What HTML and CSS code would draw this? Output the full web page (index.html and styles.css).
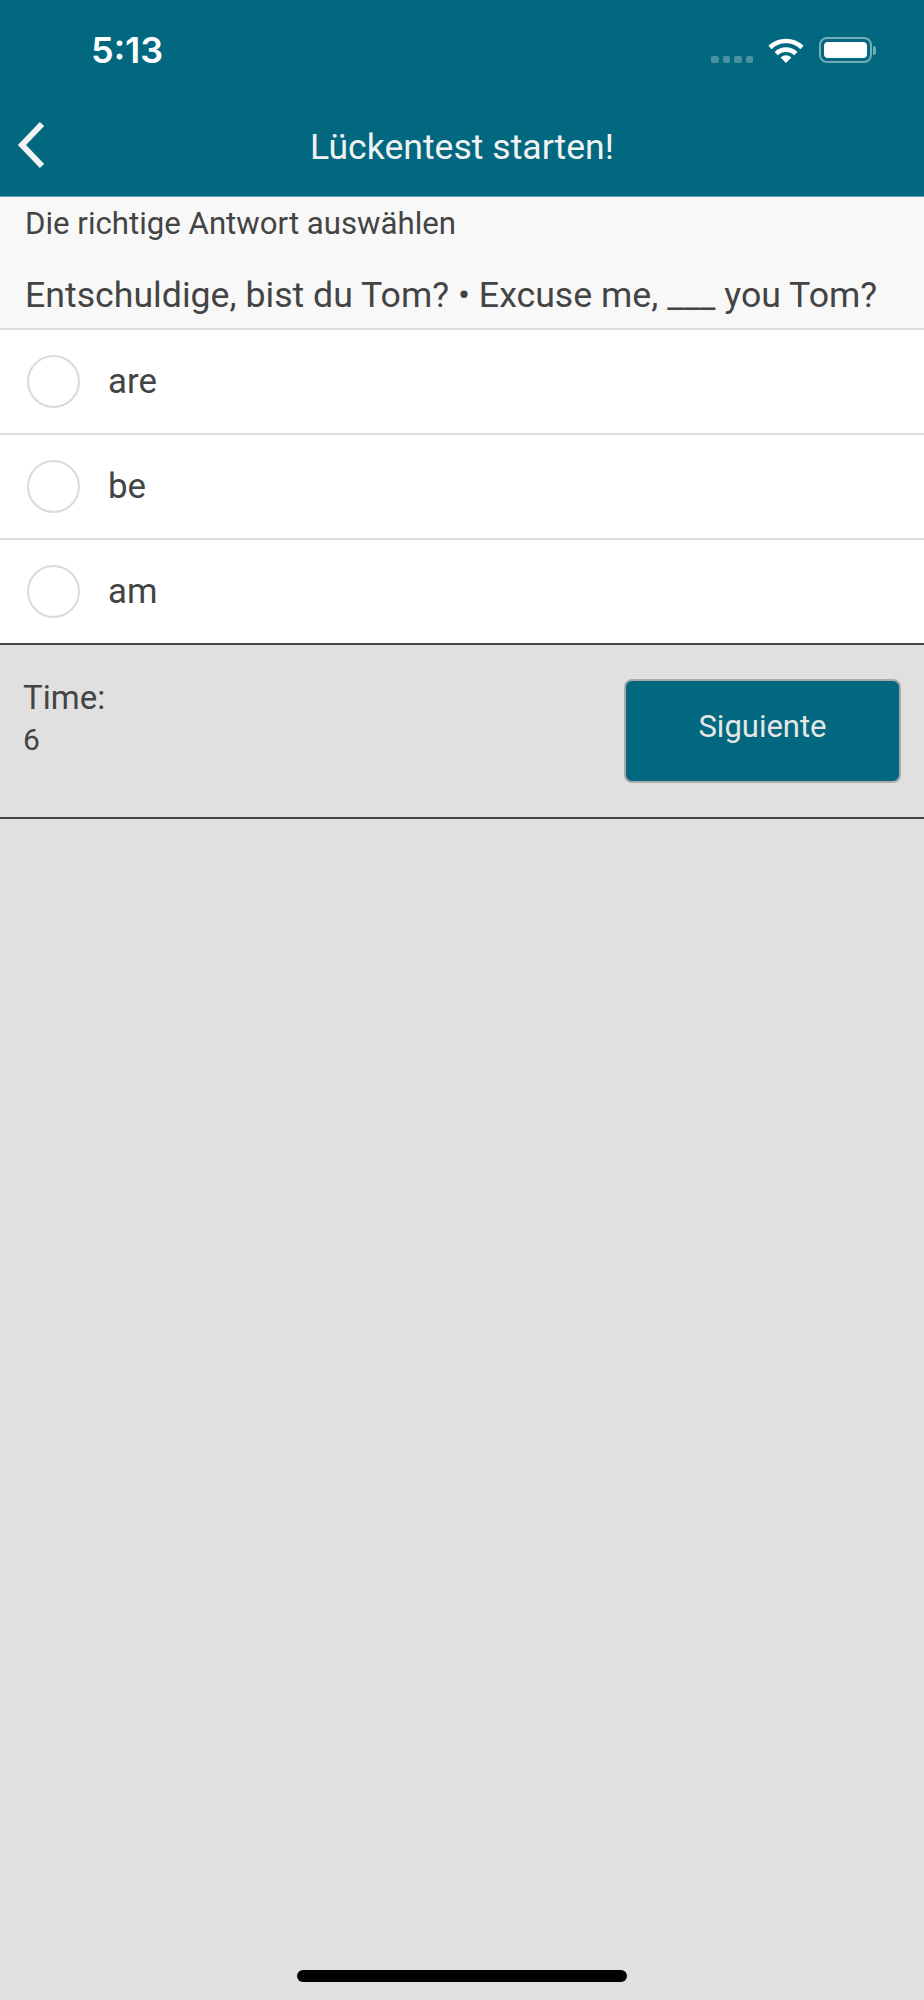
FILE: index.html
```html
<!DOCTYPE html>
<html lang="en">
<head>
  <meta charset="UTF-8">
  <meta name="viewport" content="width=device-width, initial-scale=1.0">
  <title>Lückentest starten!</title>
  <link rel="stylesheet" href="styles.css">
</head>
<body>
  <div class="app">
    <header class="header">
      <div class="status-bar">
        <span class="clock">5:13</span>
        <div class="status-icons">
          <div class="signal">
            <span class="signal-dot"></span>
            <span class="signal-dot"></span>
            <span class="signal-dot"></span>
            <span class="signal-dot"></span>
          </div>
          <svg class="wifi" width="36" height="26" viewBox="0 0 36 26">
            <path d="M2 10.5A23 23 0 0 1 34 10.5" fill="none" stroke="#fff" stroke-width="4.6"/>
            <path d="M8.2 16.6A14 14 0 0 1 27.8 16.6" fill="none" stroke="#fff" stroke-width="4.6"/>
            <path d="M12.6 20.4A8 8 0 0 1 23.4 20.4L18 26Z" fill="#fff"/>
          </svg>
          <div class="battery">
            <div class="battery-body"><div class="battery-fill"></div></div>
            <div class="battery-nub"></div>
          </div>
        </div>
      </div>
      <div class="nav-bar">
        <svg class="back" width="28" height="48" viewBox="0 0 28 48">
          <path d="M25 3L5 24L25 45" fill="none" stroke="#f2f2f2" stroke-width="6"/>
        </svg>
        <h1 class="title">Lückentest starten!</h1>
      </div>
    </header>

    <section class="question">
      <p class="hint">Die richtige Antwort auswählen</p>
      <p class="sentence">Entschuldige, bist du Tom? • Excuse me, ___ you Tom?</p>
    </section>

    <div class="answers">
      <div class="answer"><span class="radio"></span><span class="answer-text">are</span></div>
      <div class="answer"><span class="radio"></span><span class="answer-text">be</span></div>
      <div class="answer"><span class="radio"></span><span class="answer-text">am</span></div>
    </div>

    <div class="footer-row">
      <div class="timer">
        <div class="timer-label">Time:</div>
        <div class="timer-value">6</div>
      </div>
      <button type="button" class="btn">Siguiente</button>
    </div>

    <div class="home-bar"></div>
  </div>
</body>
</html>
```

FILE: styles.css
```css
* {
  box-sizing: border-box;
}
body {
  margin: 0;
  padding: 0;
  font-family: Roboto, "Liberation Sans", sans-serif;
  background: #e0e0e0;
  color: #444;
}
.app {
  position: relative;
  height: 2000px;
  background: #e0e0e0;
}
.header {
  height: 197px;
  background: #02687f;
  border-bottom: 1px solid #5b9db0;
}
.status-bar {
  height: 88px;
  padding: 28px 48px 0 91px;
  display: flex;
  justify-content: space-between;
  align-items: flex-start;
}
.clock {
  font-family: Inter, Roboto, sans-serif;
  font-size: 36px;
  line-height: 44px;
  font-weight: 600;
  color: #fff;
}
.status-icons {
  display: flex;
  align-items: flex-end;
  padding-top: 9px;
}
.signal {
  display: flex;
  gap: 4px;
  margin-right: 15px;
}
.signal-dot {
  width: 7.5px;
  height: 7px;
  border-radius: 2px;
  background: rgba(255, 255, 255, 0.28);
}
.wifi {
  display: block;
  margin-right: 15px;
}
.battery {
  display: flex;
  align-items: center;
}
.battery-body {
  width: 53px;
  height: 26px;
  padding: 3px;
  border: 2px solid rgba(255, 255, 255, 0.45);
  border-radius: 8px;
}
.battery-fill {
  width: 100%;
  height: 100%;
  background: #fff;
  border-radius: 4px;
}
.battery-nub {
  width: 3px;
  height: 9px;
  margin-left: 1px;
  background: rgba(255, 255, 255, 0.45);
  border-radius: 0 3px 3px 0;
}
.nav-bar {
  height: 108px;
  padding: 6px 45px 0 17px;
  display: flex;
  align-items: center;
}
.back {
  display: block;
}
.title {
  flex: 1;
  margin: 0;
  padding-top: 4px;
  font-size: 35.6px;
  line-height: 54px;
  font-weight: 400;
  text-align: center;
  color: #f2f2f2;
  white-space: nowrap;
}
.question {
  height: 133px;
  padding: 0 25px;
  background: #f8f8f8;
  border-bottom: 2px solid #dcdcdc;
}
.question p {
  margin: 0;
  white-space: nowrap;
}
.hint {
  padding-top: 6px;
  font-size: 31.2px;
  line-height: 42px;
}
.sentence {
  padding-top: 26px;
  font-size: 35.7px;
  line-height: 48px;
}
.answers {
  background: #fff;
}
.answer {
  height: 105px;
  padding-left: 27px;
  display: flex;
  align-items: center;
  border-bottom: 2px solid #dcdcdc;
}
.answer:last-child {
  border-bottom: 2px solid #444;
}
.radio {
  width: 53px;
  height: 53px;
  border: 2px solid #dadada;
  border-radius: 50%;
}
.answer-text {
  margin-left: 28px;
  margin-top: -2px;
  font-size: 34.8px;
}
.footer-row {
  height: 174px;
  padding: 34px 23px 0;
  display: flex;
  justify-content: space-between;
  align-items: flex-start;
  border-bottom: 2px solid #444;
}
.timer-label {
  margin-top: -3px;
  font-size: 33px;
  line-height: 44px;
}
.timer-value {
  font-size: 30px;
  line-height: 40px;
}
.btn {
  width: 277px;
  height: 104px;
  padding: 0 0 9px;
  background: #02687f;
  color: #e6e6e6;
  border: 2px solid #aaa;
  border-radius: 8px;
  font-family: Roboto, sans-serif;
  font-size: 31px;
}
.home-bar {
  position: absolute;
  left: 297px;
  bottom: 18px;
  width: 330px;
  height: 12px;
  background: #000;
  border-radius: 6px;
}
```
